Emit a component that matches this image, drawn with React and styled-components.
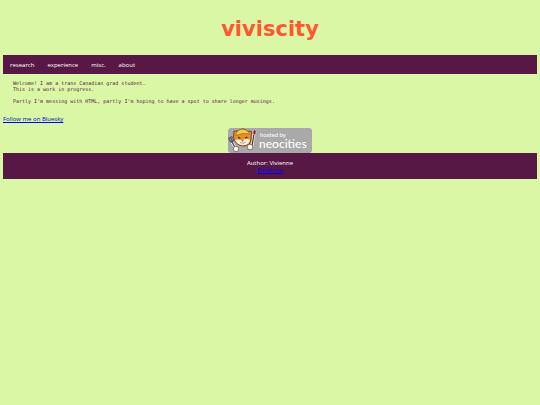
import React from "react";
import styled, { createGlobalStyle } from "styled-components";

const Colors = {
    background: "#daf7a6",
    bar: "#581845",
    title: "#ff5733",
    text: "#581845",
    white: "#ffffff",
    link: "#0000ee",
    badge: "#a9a9a9",
};

const GlobalStyle = createGlobalStyle`
    body {
        background-color: ${Colors.background};
        color: ${Colors.text};
        font-family: "Open Sans", "Noto Sans", sans-serif;
        font-size: 6px;
        line-height: 7px;
        margin: 0 3px;
    }
`;

const Title = styled.h1`
    color: ${Colors.title};
    font-family: "DejaVu Sans", sans-serif;
    font-size: 21px;
    line-height: 26px;
    margin: 0;
    padding: 16px 0 13px;
    text-align: center;
`;

const Nav = styled.nav`
    background-color: ${Colors.bar};
    display: flex;
    gap: 13px;
    padding: 7px 7px 5px;
`;

const NavLink = styled.a`
    color: ${Colors.white};
    text-decoration: none;
`;

const Welcome = styled.pre`
    font-family: "DejaVu Sans Mono", monospace;
    font-size: 5px;
    line-height: 6px;
    margin: 6px 10px 12px;
    white-space: pre-wrap;
`;

const TextLink = styled.a`
    color: ${Colors.link};
`;

const Hosted = styled.div`
    display: flex;
    justify-content: center;
    padding-top: 5px;
`;

const BadgeLink = styled.a`
    display: block;

    svg {
        display: block;
    }
`;

const Footer = styled.footer`
    background-color: ${Colors.bar};
    color: ${Colors.white};
    padding: 7px 0 5px;
    text-align: center;

    p {
        margin: 0;
    }
`;

const pages = ["research", "experience", "misc.", "about"];

const welcomeText = `Welcome! I am a trans Canadian grad student.
This is a work in progress.

Partly I'm messing with HTML, partly I'm hoping to have a spot to share longer musings.`;

const NeocitiesBadge = () => (
    <svg width="84" height="25" viewBox="0 0 84 25" role="img" aria-label="Hosted by Neocities">
        <rect width="84" height="25" rx="3" fill={Colors.badge} />
        {/* fork */}
        <path d="M4 14 L8 21" stroke="#ffffff" strokeWidth="2.6" />
        <path d="M4 14 L8 21" stroke="#4b4b50" strokeWidth="1.4" />
        <path d="M0 10 L4 8 L6 12 L5 15 L2 14 Z" fill="#55555a" />
        <path d="M1.6 10 L3.4 13 M3.6 9 L4.8 12" stroke="#d8d8d8" strokeWidth="0.5" />
        {/* brush */}
        <path d="M24 18 L26 6" stroke="#ffffff" strokeWidth="2.6" />
        <path d="M24 18 L26 6" stroke="#6b2f26" strokeWidth="1.3" />
        <path d="M25 6 Q24.5 3 27 1 Q29 4 27.2 7 Z" fill="#8c2732" stroke="#ffffff" strokeWidth="0.4" />
        {/* head */}
        <path d="M5.5 9 L6 3 L10 3 Q15 -1 19 3 L23.5 3.5 L23 11 Q23 18 15 18 Q7 17 5.5 9 Z" fill="#e98e2f" stroke="#54371f" strokeWidth="0.8" />
        <path d="M8 6 Q10 1 15 1.2 Q20 1.6 21.5 6 Q15 4 8 7.5 Z" fill="#f8cc3f" stroke="#976018" strokeWidth="0.6" />
        <path d="M7 12 Q10 11 14 12.5 Q19 10 22 12 Q21 17 15 17.2 Q9 17 7 12 Z" fill="#fff4df" />
        <path d="M10 9.4 L12.4 10.2 M17 10 L19.4 9" stroke="#302019" strokeWidth="1.2" />
        <path d="M13.4 12.4 L16 12.4 L14.8 13.8 Z" fill="#523022" />
        <path d="M12 14.5 Q15 16.5 18 14" fill="none" stroke="#7b4930" strokeWidth="0.5" />
        {/* paws */}
        <ellipse cx="8" cy="21" rx="2.6" ry="2.8" fill="#fff8e8" stroke="#4d4038" strokeWidth="0.6" />
        <ellipse cx="22" cy="19" rx="2.8" ry="2.8" fill="#fff8e8" stroke="#4d4038" strokeWidth="0.6" />
        <g fill={Colors.white} fontFamily="Lato, sans-serif">
            <text x="32" y="9" fontSize="6">hosted by</text>
            <text x="31" y="20" fontSize="12" fontWeight="500">neocities</text>
        </g>
    </svg>
);

export default function App() {
    return (
        <>
            <GlobalStyle />
            <header>
                <Title>viviscity</Title>
                <Nav>
                    {pages.map((page) => (
                        <NavLink key={page} href={`#${page}`}>{page}</NavLink>
                    ))}
                </Nav>
            </header>
            <main>
                <Welcome>{welcomeText}</Welcome>
                <TextLink href="#bluesky">Follow me on Bluesky</TextLink>
                <Hosted>
                    <BadgeLink href="#neocities">
                        <NeocitiesBadge />
                    </BadgeLink>
                </Hosted>
            </main>
            <Footer>
                <p>Author: Vivienne</p>
                <TextLink href="#email">Email me</TextLink>
            </Footer>
        </>
    );
}
